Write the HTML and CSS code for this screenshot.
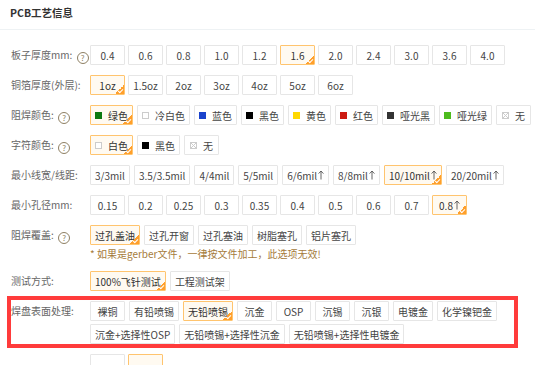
FILE: index.html
```html
<!DOCTYPE html>
<html lang="zh-CN">
<head>
    <meta charset="UTF-8">
    <meta name="viewport" content="width=device-width, initial-scale=1.0">
    <title>PCB工艺信息</title>
    <link rel="stylesheet" href="styles.css">
</head>
<body>

    <div class="panel">
        <div class="panel-head">PCB工艺信息</div>

        <div class="form">
            <!-- 板子厚度 -->
            <div class="row">
                <div class="label">板子厚度mm: <span class="tip">?</span></div>
                <div class="opts fixed">
                    <span class="opt">0.4</span>
                    <span class="opt">0.6</span>
                    <span class="opt">0.8</span>
                    <span class="opt">1.0</span>
                    <span class="opt">1.2</span>
                    <span class="opt on">1.6</span>
                    <span class="opt">2.0</span>
                    <span class="opt">2.4</span>
                    <span class="opt">3.0</span>
                    <span class="opt">3.6</span>
                    <span class="opt">4.0</span>
                </div>
            </div>

            <!-- 铜箔厚度 -->
            <div class="row">
                <div class="label">铜箔厚度(外层):</div>
                <div class="opts fixed">
                    <span class="opt on">1oz</span>
                    <span class="opt">1.5oz</span>
                    <span class="opt">2oz</span>
                    <span class="opt">3oz</span>
                    <span class="opt">4oz</span>
                    <span class="opt">5oz</span>
                    <span class="opt">6oz</span>
                </div>
            </div>

            <!-- 阻焊颜色 -->
            <div class="row">
                <div class="label">阻焊颜色: <span class="tip">?</span></div>
                <div class="opts">
                    <span class="opt on"><i class="sw green"></i>绿色</span>
                    <span class="opt"><i class="sw white"></i>冷白色</span>
                    <span class="opt"><i class="sw blue"></i>蓝色</span>
                    <span class="opt"><i class="sw black"></i>黑色</span>
                    <span class="opt"><i class="sw yellow"></i>黄色</span>
                    <span class="opt"><i class="sw red"></i>红色</span>
                    <span class="opt"><i class="sw matte-black"></i>哑光黑</span>
                    <span class="opt"><i class="sw matte-green"></i>哑光绿</span>
                    <span class="opt"><i class="sw none"></i>无</span>
                </div>
            </div>

            <!-- 字符颜色 -->
            <div class="row">
                <div class="label">字符颜色: <span class="tip">?</span></div>
                <div class="opts">
                    <span class="opt on"><i class="sw white"></i>白色</span>
                    <span class="opt"><i class="sw black"></i>黑色</span>
                    <span class="opt"><i class="sw none"></i>无</span>
                </div>
            </div>

            <!-- 最小线宽/线距 -->
            <div class="row">
                <div class="label">最小线宽/线距:</div>
                <div class="opts">
                    <span class="opt">3/3mil</span>
                    <span class="opt">3.5/3.5mil</span>
                    <span class="opt">4/4mil</span>
                    <span class="opt">5/5mil</span>
                    <span class="opt">6/6mil<svg class="up" viewBox="0 0 6 10"><path d="M3 9.5V1M0.6 3.6L3 1l2.4 2.6"/></svg></span>
                    <span class="opt">8/8mil<svg class="up" viewBox="0 0 6 10"><path d="M3 9.5V1M0.6 3.6L3 1l2.4 2.6"/></svg></span>
                    <span class="opt on">10/10mil<svg class="up" viewBox="0 0 6 10"><path d="M3 9.5V1M0.6 3.6L3 1l2.4 2.6"/></svg></span>
                    <span class="opt">20/20mil<svg class="up" viewBox="0 0 6 10"><path d="M3 9.5V1M0.6 3.6L3 1l2.4 2.6"/></svg></span>
                </div>
            </div>

            <!-- 最小孔径 -->
            <div class="row">
                <div class="label">最小孔径mm:</div>
                <div class="opts fixed">
                    <span class="opt">0.15</span>
                    <span class="opt">0.2</span>
                    <span class="opt">0.25</span>
                    <span class="opt">0.3</span>
                    <span class="opt">0.35</span>
                    <span class="opt">0.4</span>
                    <span class="opt">0.5</span>
                    <span class="opt">0.6</span>
                    <span class="opt">0.7</span>
                    <span class="opt on">0.8<svg class="up" viewBox="0 0 6 10"><path d="M3 9.5V1M0.6 3.6L3 1l2.4 2.6"/></svg></span>
                </div>
            </div>

            <!-- 阻焊覆盖 -->
            <div class="row">
                <div class="label">阻焊覆盖: <span class="tip">?</span></div>
                <div class="opts">
                    <span class="opt on">过孔盖油</span>
                    <span class="opt">过孔开窗</span>
                    <span class="opt">过孔塞油</span>
                    <span class="opt">树脂塞孔</span>
                    <span class="opt">铝片塞孔</span>
                    <p class="note">* 如果是gerber文件，一律按文件加工，此选项无效!</p>
                </div>
            </div>

            <!-- 测试方式 -->
            <div class="row">
                <div class="label">测试方式:</div>
                <div class="opts">
                    <span class="opt on">100%飞针测试</span>
                    <span class="opt">工程测试架</span>
                </div>
            </div>

            <!-- 焊盘表面处理 -->
            <div class="row marked">
                <div class="label">焊盘表面处理:</div>
                <div class="opts">
                    <span class="opt">裸铜</span>
                    <span class="opt">有铅喷锡</span>
                    <span class="opt on">无铅喷锡</span>
                    <span class="opt">沉金</span>
                    <span class="opt">OSP</span>
                    <span class="opt">沉锡</span>
                    <span class="opt">沉银</span>
                    <span class="opt">电镀金</span>
                    <span class="opt">化学镍钯金</span>
                    <span class="opt">沉金+选择性OSP</span>
                    <span class="opt">无铅喷锡+选择性沉金</span>
                    <span class="opt">无铅喷锡+选择性电镀金</span>
                </div>
            </div>

            <!-- 下一行（被截断） -->
            <div class="row">
                <div class="label"></div>
                <div class="opts fixed">
                    <span class="opt"></span>
                    <span class="opt picked"></span>
                </div>
            </div>
        </div>
    </div>

</body>
</html>
```

FILE: styles.css
```css
* {
    margin: 0;
    padding: 0;
    box-sizing: border-box;
}

body {
    font-family: "Noto Sans CJK SC", "Noto Sans", sans-serif;
    font-size: 10px;
    color: #444;
    background-color: #fff;
    overflow: hidden;
    height: 365px;
}

/* 标题 */
.panel-head {
    height: 30px;
    padding: 3px 10px 0;
    line-height: 19px;
    font-size: 10.5px;
    font-weight: bold;
    color: #333;
    border-bottom: 1px solid #eef2f4;
    margin-right: 7px;
}

.form {
    padding-top: 15px;
}

/* 每一行 */
.row {
    display: flex;
    align-items: flex-start;
    margin-bottom: 10px;
}

.label {
    flex: none;
    width: 90px;
    padding-left: 11px;
    line-height: 20px;
    color: #666;
    white-space: nowrap;
}

.tip {
    display: inline-block;
    width: 12px;
    height: 12px;
    margin-left: 2px;
    border: 1px solid #8e7f63;
    border-radius: 50%;
    color: #8e7f63;
    font-size: 8px;
    line-height: 10px;
    text-align: center;
    vertical-align: -2px;
}

/* 选项 */
.opts {
    display: flex;
    flex-wrap: wrap;
    gap: 3px 4px;
    flex: 1;
    padding-right: 4px;
}

.opts.fixed {
    column-gap: 3px;
}

.opt {
    position: relative;
    display: inline-flex;
    align-items: center;
    justify-content: center;
    min-width: 35px;
    height: 20px;
    padding: 0 4px;
    border: 1px solid #e6e6e6;
    border-radius: 1px;
    background-color: #fff;
    color: #444;
    white-space: nowrap;
}

.opts.fixed .opt {
    width: 35px;
    padding: 0;
}

.opt.on,
.opt.picked {
    border-color: #ffc46e;
    background-color: #fffaf1;
    color: #333;
}

.up {
    width: 6px;
    height: 10px;
    margin-left: 1px;
    fill: none;
    stroke: #555;
    stroke-width: 0.9;
}

/* 右下角的勾 */
.opt.on::after {
    content: "";
    position: absolute;
    right: 0;
    bottom: 0;
    width: 9px;
    height: 9px;
    background: linear-gradient(135deg, transparent 50%, #ff9f2b 50%);
}

.opt.on::before {
    content: "";
    position: absolute;
    right: 1px;
    bottom: 2px;
    width: 4px;
    height: 2px;
    border-left: 1px solid #fff;
    border-bottom: 1px solid #fff;
    transform: rotate(-45deg);
    z-index: 1;
}

/* 颜色块 */
.sw {
    display: inline-block;
    width: 7px;
    height: 7px;
    margin-right: 6px;
}

.sw.green { background-color: #0b7a12; }
.sw.white { background-color: #fff; border: 1px solid #ccc; }
.sw.blue { background-color: #1a43cc; }
.sw.black { background-color: #000; }
.sw.yellow { background-color: #ffd800; }
.sw.red { background-color: #cc1a12; }
.sw.matte-black { background-color: #333; }
.sw.matte-green { background-color: #4dbb1d; }

.sw.none {
    border: 1px solid #ccc;
    background:
        linear-gradient(45deg, transparent 45%, #ccc 45%, #ccc 55%, transparent 55%),
        linear-gradient(-45deg, transparent 45%, #ccc 45%, #ccc 55%, transparent 55%);
}

.note {
    flex-basis: 100%;
    margin-top: -1px;
    line-height: 14px;
    color: #a57b3b;
}

/* 红框标注 */
.row.marked {
    position: relative;
}

.row.marked::after {
    content: "";
    position: absolute;
    left: 7px;
    right: 24px;
    top: -5px;
    bottom: -4px;
    border: 4px solid #ff3b3b;
    pointer-events: none;
}
```
